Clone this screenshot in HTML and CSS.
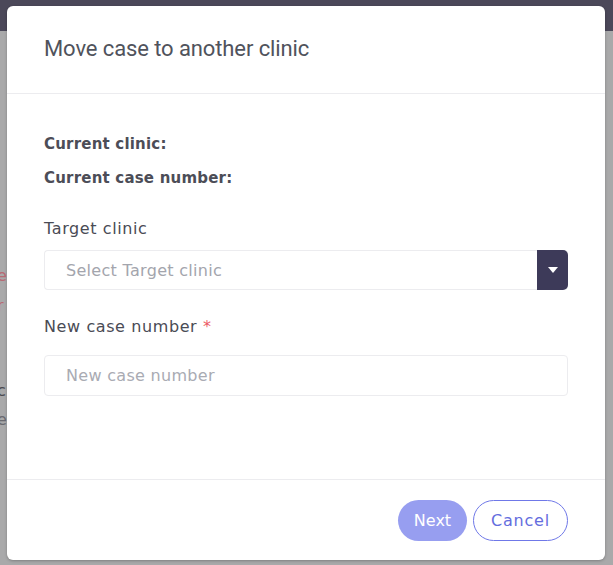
FILE: index.html
```html
<!DOCTYPE html>
<html>
<head>
<meta charset="utf-8">
<link rel="stylesheet" href="styles.css">
</head>
<body>
<div class="page">
  <div class="topbar"></div>
  <div class="content">
    <div class="strip">
      <span class="frag red f1">e</span>
      <span class="frag red f2">r</span>
      <span class="frag dark f3">c</span>
      <span class="frag gray f4">e</span>
    </div>
  </div>
</div>
<div class="modal">
  <div class="modal-header">
    <h1 class="modal-title">Move case to another clinic</h1>
  </div>
  <div class="modal-body">
    <p class="info">Current clinic:</p>
    <p class="info">Current case number:</p>
    <label class="field-label first">Target clinic</label>
    <div class="select">
      <span class="select-text">Select Target clinic</span>
      <span class="select-btn">
        <svg width="10" height="6" viewBox="0 0 10 6"><path d="M0 0h10L5 6z" fill="#fff"/></svg>
      </span>
    </div>
    <label class="field-label second">New case number <span class="req">*</span></label>
    <div class="input"><span class="placeholder">New case number</span></div>
  </div>
  <div class="modal-footer">
    <button class="btn btn-next">Next</button>
    <button class="btn btn-cancel">Cancel</button>
  </div>
</div>
</body>
</html>
```
FILE: styles.css
```css
* { box-sizing: border-box; }
html, body { margin: 0; padding: 0; }
body {
  width: 613px;
  height: 565px;
  overflow: hidden;
  position: relative;
  font-family: "DejaVu Sans", sans-serif;
  background: #a9a9aa;
}
.page { height: 565px; display: flex; flex-direction: column; }
.topbar { height: 31px; background: #4b4859; flex: none; }
.content { flex: 1; }
.strip {
  width: 7px;
  overflow: hidden;
  padding-top: 235px;
  display: flex;
  flex-direction: column;
  font-size: 16px;
  line-height: 20px;
}
.frag { display: block; margin-left: -3px; }
.f2 { margin-top: 10px; }
.f3 { margin-top: 65px; }
.f4 { margin-top: 9px; }
.red { color: #b86a74; }
.dark { color: #4a4a50; }
.gray { color: #6a6a70; }

.modal {
  position: absolute;
  left: 7px;
  top: 6px;
  width: 598px;
  height: 554px;
  background: #fff;
  border-radius: 6px;
  box-shadow: 0 1px 3px rgba(0,0,0,0.25);
  display: flex;
  flex-direction: column;
}
.modal-header {
  height: 88px;
  padding: 0 37px;
  border-bottom: 1px solid #ececef;
  display: flex;
  align-items: center;
}
.modal-title {
  margin: 0 0 2px;
  font-family: Roboto, "Liberation Sans", sans-serif;
  font-weight: 400;
  font-size: 22px;
  color: #50535c;
  letter-spacing: -0.1px;
}
.modal-body {
  flex: 1;
  padding: 39px 37px 0;
  color: #4a4b55;
}
.info {
  margin: 0 0 12px;
  font-weight: 700;
  font-size: 15px;
  line-height: 22px;
  color: #4c4d57;
  letter-spacing: 0.2px;
}
.field-label {
  display: block;
  font-size: 16px;
  line-height: 22px;
  color: #4a4b55;
  letter-spacing: 0.6px;
}
.field-label.first { margin-top: 29px; margin-bottom: 10px; }
.field-label.second { margin-top: 26px; margin-bottom: 17px; }
.req { color: #ec5a66; }
.select {
  height: 40px;
  width: 524px;
  display: flex;
  border: 1px solid #ececef;
  border-radius: 4px;
  border-right: none;
}
.select-text {
  flex: 1;
  padding-left: 21px;
  display: flex;
  align-items: center;
  font-size: 16px;
  letter-spacing: 0.3px;
  color: #a3a5ad;
}
.select-btn {
  width: 31px;
  margin: -1px 0;
  background: #3d3a59;
  border-radius: 0 5px 5px 0;
  display: flex;
  align-items: center;
  justify-content: center;
}
.input {
  height: 41px;
  width: 524px;
  border: 1px solid #ececef;
  border-radius: 4px;
  padding-left: 21px;
  display: flex;
  align-items: center;
}
.placeholder { font-size: 16px; letter-spacing: 0.3px; color: #a9abb3; }
.modal-footer {
  height: 81px;
  border-top: 1px solid #ececef;
  display: flex;
  justify-content: flex-end;
  align-items: flex-start;
  padding: 20px 37px 0;
  gap: 6px;
}
.btn {
  height: 41px;
  border-radius: 21px;
  font-family: "DejaVu Sans", sans-serif;
  font-size: 16px;
  padding: 0;
  cursor: pointer;
}
.btn-next {
  width: 69px;
  background: #979ef0;
  border: none;
  color: #fff;
}
.btn-cancel {
  width: 95px;
  background: #fff;
  border: 1px solid #6f78e8;
  color: #646dde;
  letter-spacing: 0.8px;
}
```
